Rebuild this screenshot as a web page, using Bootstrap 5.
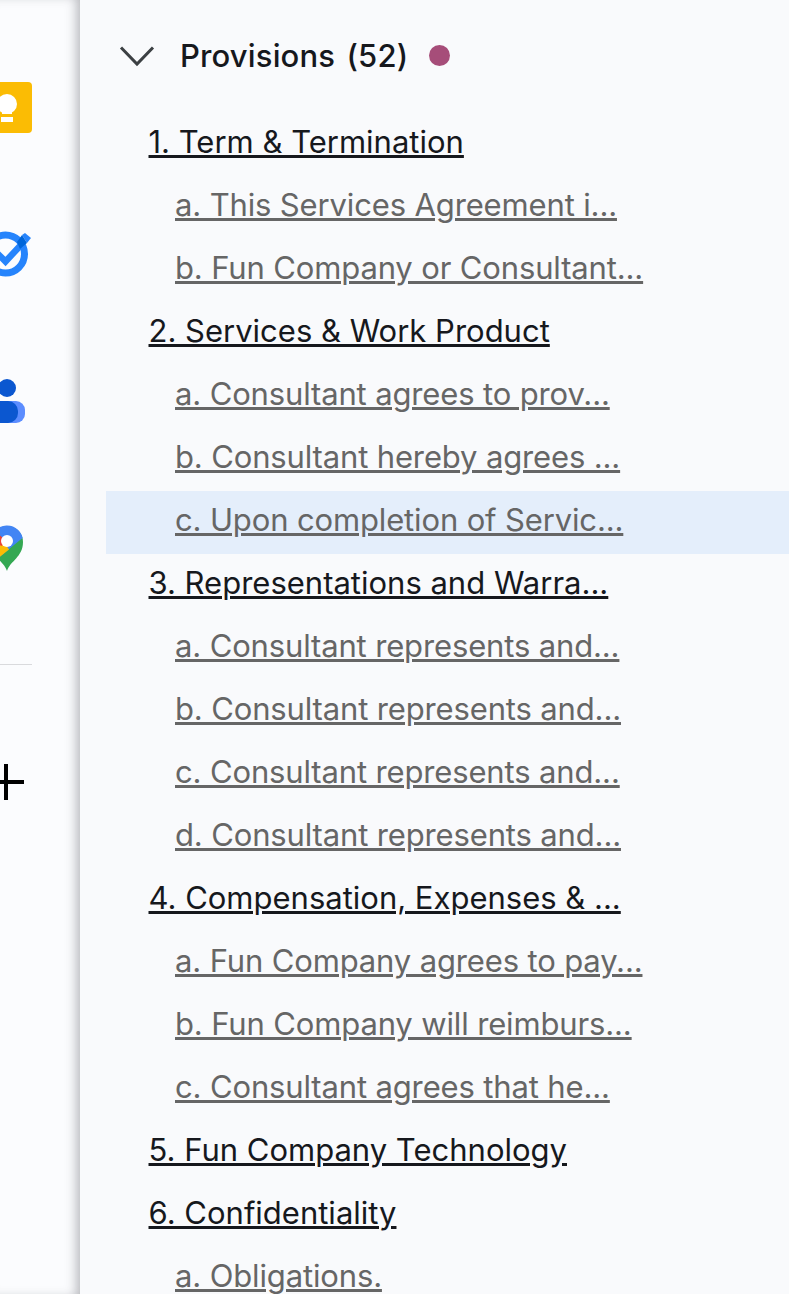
<!DOCTYPE html>
<html lang="en">
<head>
    <meta charset="UTF-8">
    <title>Provisions</title>
    <link href="https://cdn.jsdelivr.net/npm/bootstrap@5.3.2/dist/css/bootstrap.min.css" rel="stylesheet">
    <style>
        html, body { height: 100%; }
        body {
            background: #f9fafc;
            font-family: Inter, "Liberation Sans", sans-serif;
            overflow: hidden;
        }
        .page-wrap { height: 1294px; overflow: hidden; }

        .side-rail {
            width: 80px;
            flex: none;
            background: #fbfcfe;
            overflow: hidden;
            box-shadow: inset -8px 0 12px -5px rgba(60, 64, 72, 0.38);
            padding-top: 82px;
        }
        .rail-icon { display: block; margin-left: -32px; width: 64px; }
        .rail-keep { height: 51px; margin-bottom: 98px; }
        .rail-task { height: 47px; margin-bottom: 101px; }
        .rail-people { height: 44px; margin-bottom: 102px; }
        .rail-maps { height: 46px; margin-bottom: 93px; }
        .rail-sep { width: 32px; height: 1px; background: #d9dadd; margin-bottom: 99px; }
        .rail-plus { height: 36px; }

        .outline-pane { min-width: 0; padding-top: 24px; }
        .outline-head { height: 63px; padding-left: 39px; }
        .outline-chev { width: 36px; height: 24px; margin-right: 25px; }
        .outline-title {
            font-size: 31px;
            font-weight: 500;
            color: #16181d;
            letter-spacing: 0.15px;
            word-spacing: 3px;
            margin-top: 2px;
        }
        .outline-dot {
            width: 21px;
            height: 21px;
            border-radius: 50%;
            background: #a64d79;
            margin-left: 21px;
        }
        .outline-list { margin: 26px 0 0 26px; padding: 0; list-style: none; }
        .outline-list li {
            height: 63px;
            line-height: 57px;
            font-size: 31px;
            white-space: nowrap;
        }
        .outline-list a { text-decoration: underline; text-decoration-thickness: 3px; text-underline-offset: 2px; }
        .lvl-top { padding-left: 42.5px; }
        .lvl-top a { color: #16181d; }
        .lvl-sub { padding-left: 69px; letter-spacing: -0.14px; }
        .lvl-sub a { color: #666; }
        .lvl-active { background: #e4eefb; }
    </style>
</head>
<body>
    <div class="page-wrap d-flex">
        <div class="side-rail">
            <svg class="rail-icon rail-keep" viewBox="0 0 64 51">
                <rect x="0" y="0" width="64" height="51" rx="4" fill="#fbbc04"/>
                <circle cx="39" cy="22" r="10" fill="#fff"/>
                <rect x="34" y="24" width="10" height="8" fill="#fff"/>
                <rect x="33" y="35" width="12" height="5" fill="#fff"/>
            </svg>
            <svg class="rail-icon rail-task" viewBox="0 0 64 47">
                <circle cx="37.500" cy="23" r="19" fill="none" stroke="#2684fc" stroke-width="7"/>
                <path d="M28 21l9.500 9.500L52 15" fill="none" stroke="#2684fc" stroke-width="6.500"/>
                <path d="M54 4l3-2 6 5-4 5z" fill="#2684fc"/>
                <path d="M49 11l5-7 5 8-7 6z" fill="#0066da"/>
            </svg>
            <svg class="rail-icon rail-people" viewBox="0 0 64 44">
                <circle cx="39" cy="9" r="9" fill="#0b57d0"/>
                <path d="M20 22h28a9 9 0 0 1 9 9v4a9 9 0 0 1-9 9h-28z" fill="#5c8dff"/>
                <path d="M20 22h20a10 10 0 0 1 10 10v2a10 10 0 0 1-10 10h-20z" fill="#0b57d0"/>
            </svg>
            <svg class="rail-icon rail-maps" viewBox="0 0 64 46">
                <path d="M39 46c-3-10-16-14-16-29a16 16 0 0 1 32 0c0 15-13 19-16 29z" fill="#34a853"/>
                <path d="M23 17a16 16 0 0 1 32-1l-.5-3L29 34z" fill="#4285f4"/>
                <path d="M23 17L36 17l5 7.500L29 34c-4-6-6-11-6-17z" fill="#fbbc04"/>
                <path d="M23 17a16 16 0 0 1 4-11l10 9-3 6z" fill="#ea4335"/>
                <circle cx="39" cy="16" r="6" fill="#fff"/>
            </svg>
            <div class="rail-sep"></div>
            <svg class="rail-icon rail-plus" viewBox="0 0 64 36">
                <path d="M38 0v36M20 18h36" stroke="#000" stroke-width="4" fill="none"/>
            </svg>
        </div>

        <div class="outline-pane flex-grow-1">
            <div class="outline-head d-flex align-items-center">
                <svg class="outline-chev" viewBox="0 0 36 24">
                    <path d="M2 3.500L18 20 34 3.500" fill="none" stroke="#3c4043" stroke-width="3"/>
                </svg>
                <span class="outline-title">Provisions (52)</span>
                <span class="outline-dot"></span>
            </div>
            <ul class="outline-list">
                <li class="lvl-top"><a href="#">1. Term &amp; Termination</a></li>
                <li class="lvl-sub"><a href="#">a. This Services Agreement i...</a></li>
                <li class="lvl-sub"><a href="#">b. Fun Company or Consultant...</a></li>
                <li class="lvl-top"><a href="#">2. Services &amp; Work Product</a></li>
                <li class="lvl-sub"><a href="#">a. Consultant agrees to prov...</a></li>
                <li class="lvl-sub"><a href="#">b. Consultant hereby agrees ...</a></li>
                <li class="lvl-sub lvl-active"><a href="#">c. Upon completion of Servic...</a></li>
                <li class="lvl-top"><a href="#">3. Representations and Warra...</a></li>
                <li class="lvl-sub"><a href="#">a. Consultant represents and...</a></li>
                <li class="lvl-sub"><a href="#">b. Consultant represents and...</a></li>
                <li class="lvl-sub"><a href="#">c. Consultant represents and...</a></li>
                <li class="lvl-sub"><a href="#">d. Consultant represents and...</a></li>
                <li class="lvl-top"><a href="#">4. Compensation, Expenses &amp; ...</a></li>
                <li class="lvl-sub"><a href="#">a. Fun Company agrees to pay...</a></li>
                <li class="lvl-sub"><a href="#">b. Fun Company will reimburs...</a></li>
                <li class="lvl-sub"><a href="#">c. Consultant agrees that he...</a></li>
                <li class="lvl-top"><a href="#">5. Fun Company Technology</a></li>
                <li class="lvl-top"><a href="#">6. Confidentiality</a></li>
                <li class="lvl-sub"><a href="#">a. Obligations.</a></li>
            </ul>
        </div>
    </div>
    <script src="https://cdn.jsdelivr.net/npm/bootstrap@5.3.2/dist/js/bootstrap.bundle.min.js"></script>
</body>
</html>
